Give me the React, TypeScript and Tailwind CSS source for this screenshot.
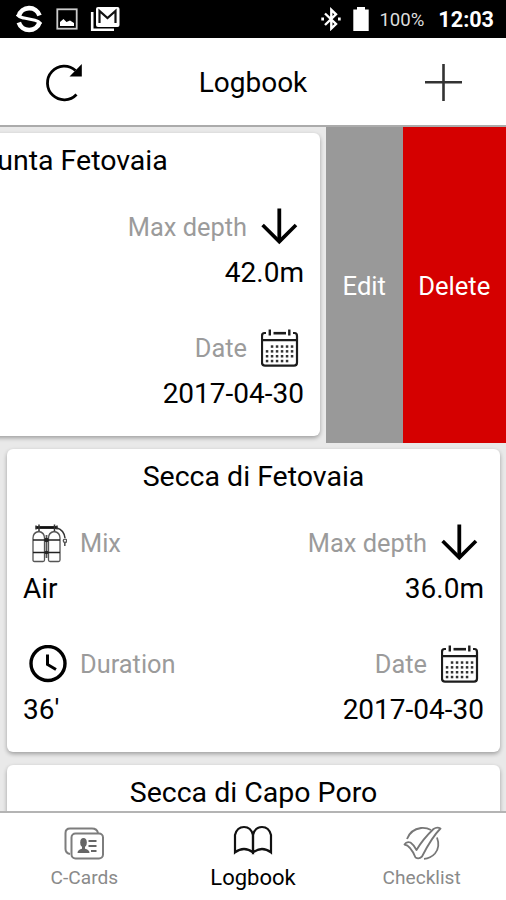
import type { ReactNode } from "react";

type Dive = {
  site: string;
  mix?: string;
  depth?: string;
  duration?: string;
  date?: string;
};

const dives: Dive[] = [
  { site: "Punta Fetovaia", depth: "42.0m", date: "2017-04-30" },
  { site: "Secca di Fetovaia", mix: "Air", depth: "36.0m", duration: "36'", date: "2017-04-30" },
  { site: "Secca di Capo Poro" },
];

function ArrowDownIcon() {
  return (
    <svg width="38" height="38" viewBox="0 0 38 38" fill="none" stroke="#000">
      <path d="M18.3 0.5V34" strokeWidth="3.8" />
      <path d="M1.6 17L18.3 33.6L35 17" strokeWidth="3.6" />
    </svg>
  );
}

function CalendarIcon() {
  const rows = [
    { y: 17.5, xs: [11, 16, 21, 26, 31] },
    { y: 22.3, xs: [6, 11, 16, 21, 26, 31] },
    { y: 27.2, xs: [6, 11, 16, 21, 26, 31] },
    { y: 32, xs: [6, 11, 16, 21, 26] },
  ];
  return (
    <svg width="38" height="38" viewBox="0 0 38 38" fill="none" stroke="#1c1c1c">
      <path d="M5 4H3.5Q1 4 1 7V33.5Q1 36.7 4 36.7H33Q36 36.7 36 33.5V7Q36 4 33.5 4H32" strokeWidth="2.2" />
      <path d="M12.5 4.2H25" strokeWidth="2.6" />
      <path d="M8.8 0.5V6.5M28.3 0.5V6.5" strokeWidth="2.4" />
      <path d="M1 11.2H36" strokeWidth="2.2" />
      {rows.map((row) =>
        row.xs.map((x) => (
          <rect key={`${x}-${row.y}`} x={x - 1.2} y={row.y - 1.2} width="2.5" height="2.5" fill="#333" stroke="none" />
        ))
      )}
    </svg>
  );
}

function ClockIcon() {
  return (
    <svg width="38" height="38" viewBox="0 0 38 38" fill="none" stroke="#000">
      <circle cx="19" cy="18.5" r="17" strokeWidth="3.4" />
      <path d="M18.5 9.5V19.5L27 24.5" strokeWidth="3" />
    </svg>
  );
}

function TanksIcon() {
  return (
    <svg width="38" height="40" viewBox="0 0 38 40" fill="none" stroke="#555">
      <path d="M4 37V15Q4 9.5 9.8 8.5Q15.5 9.5 15.5 15V37Q15.5 38.5 14 38.5H5.5Q4 38.5 4 37Z" strokeWidth="1.3" />
      <path d="M19.5 37V15Q19.5 9.5 25.2 8.5Q31 9.5 31 15V37Q31 38.5 29.5 38.5H21Q19.5 38.5 19.5 37Z" strokeWidth="1.3" />
      <path d="M4 17H31M4 29.5H31" stroke="#222" strokeWidth="1.5" />
      <path d="M17.5 12V35" strokeWidth="1.8" />
      <path d="M7 4.5H28" stroke="#111" strokeWidth="2.8" />
      <path d="M10 1.5V8M25.5 1.5V8M7 2.5V6.5M28 2.5V6.5" stroke="#333" strokeWidth="1.5" />
      <path d="M28 5Q35 7 36 15" stroke="#333" strokeWidth="1.5" />
      <circle cx="36" cy="17.8" r="1.7" strokeWidth="1.4" />
      <path d="M35.8 19.5V23" strokeWidth="1.6" />
      <circle cx="17.5" cy="17" r="2.2" fill="#222" stroke="none" />
      <circle cx="17.5" cy="29.5" r="1.8" fill="#222" stroke="none" />
    </svg>
  );
}

type FieldProps = { icon: ReactNode; label: string; value?: string; right?: boolean };

function Field({ icon, label, value, right }: FieldProps) {
  if (!value) return null;
  return (
    <div className={right ? "col-start-2 text-right" : ""}>
      <div className={`flex h-[38px] items-center gap-2 ${right ? "flex-row-reverse" : ""}`}>
        <span className="flex w-[49px] justify-center">{icon}</span>
        <span className="text-[25.4px] leading-[38px] text-[#9b9b9b]">{label}</span>
      </div>
      <div className="mt-[9px] text-[28px] leading-9">{value}</div>
    </div>
  );
}

function DiveCard({ dive }: { dive: Dive }) {
  return (
    <div className="h-[316px] w-[506px] shrink-0 bg-[#e9e9e9] pt-1.5 pr-1.5 pl-[7px]">
      <div className="h-[303px] rounded-md bg-white px-4 shadow-[0_2px_4px_rgba(0,0,0,0.32)]">
        <h2 className="pt-px text-center text-[28.5px] leading-[54px]">{dive.site}</h2>
        <div className="mt-5 grid grid-cols-2 gap-y-[38px]">
          <Field icon={<TanksIcon />} label="Mix" value={dive.mix} />
          <Field icon={<ArrowDownIcon />} label="Max depth" value={dive.depth} right />
          <Field icon={<ClockIcon />} label="Duration" value={dive.duration} />
          <Field icon={<CalendarIcon />} label="Date" value={dive.date} right />
        </div>
      </div>
    </div>
  );
}

function StatusBar() {
  return (
    <div className="flex h-[38px] shrink-0 items-center bg-black pr-3 pl-4 text-white">
      <svg width="26" height="28" viewBox="0 0 26 28" fill="none" stroke="#fff">
        <path d="M23.5 10.5A10.8 10.6 0 0 0 2.8 11" strokeWidth="4.6" />
        <path d="M2.8 17.5A10.8 10.6 0 0 0 23.5 17.5" strokeWidth="4.6" />
        <path d="M1 9.5Q3 12.3 7 12.8L19 15.3Q23 16.2 25 19" strokeWidth="3.2" />
      </svg>
      <svg className="ml-3.5" width="22" height="22" viewBox="0 0 22 22">
        <rect x="1.3" y="1.3" width="19.4" height="19.4" fill="none" stroke="#ccc" strokeWidth="1.8" />
        <path d="M4 18V14L7.5 11L10.5 14L14 12.5L18 15V18Z" fill="#fff" />
      </svg>
      <svg className="ml-3" width="30" height="26" viewBox="0 0 30 26">
        <path d="M2.2 6V23.8H24" fill="none" stroke="#fff" strokeWidth="2.6" />
        <rect x="6" y="1" width="23.5" height="20" rx="2" fill="#fff" />
        <path d="M9.5 17V5L17.5 12L25.5 5V17" fill="none" stroke="#111" strokeWidth="2.2" />
      </svg>
      <svg className="ml-auto" width="20" height="24" viewBox="0 0 20 24" fill="none" stroke="#fff" strokeWidth="2.4">
        <path d="M4 6.5L15 17L10.3 21.5V2.8L15 7.3L4 18" />
        <path d="M0.3 12H3M17 12H19.7" strokeWidth="2.8" />
      </svg>
      <svg className="ml-3" width="16" height="25" viewBox="0 0 16 25" fill="#fff">
        <path d="M4 0H12V2.5H15.7V24H0.3V2.5H4Z" />
      </svg>
      <span className="ml-2.5 pt-0.5 text-[18.6px] leading-[38px] text-[#ddd]">100%</span>
      <span className="ml-3.5 pt-0.5 text-[21.6px] leading-[38px] font-bold">12:03</span>
    </div>
  );
}

function Header() {
  return (
    <header className="grid h-[89px] shrink-0 grid-cols-[100px_1fr_100px] items-center border-b-2 border-[#ababab] pt-0.5">
      <svg className="ml-[45px]" width="38" height="38" viewBox="0 0 38 38">
        <path d="M31.5 30.5A16.8 16.8 0 1 1 30.5 6.5" fill="none" stroke="#000" strokeWidth="2.8" />
        <path d="M36.8 0V12.5H24.5Z" fill="#000" />
      </svg>
      <h1 className="text-center text-[28px]">Logbook</h1>
      <svg className="ml-[19px]" width="38" height="38" viewBox="0 0 38 38" fill="none" stroke="#333" strokeWidth="2.6">
        <path d="M18.5 0V37M0 18.3H37" />
      </svg>
    </header>
  );
}

function TabBar() {
  return (
    <nav className="grid h-[89px] shrink-0 grid-cols-3 border-t-2 border-[#b4b4b4] bg-white text-[19.1px] text-[#8a8a8a]">
      <div className="flex flex-col items-center pt-3.5">
        <svg width="40" height="34" viewBox="0 0 40 34" fill="none" stroke="#7d7d7d" strokeWidth="2">
          <path d="M6 27Q1.5 26 1.5 22V6Q1.5 1.5 6 1.5H28Q33 1.5 34 6" />
          <rect x="7.5" y="6.5" width="31.5" height="25" rx="4" />
          <ellipse cx="19.5" cy="15.5" rx="3.3" ry="4.5" fill="#666" stroke="none" />
          <path d="M18 18H21V22H18Z" fill="#666" stroke="none" />
          <path d="M13.5 26Q13.5 22.3 19.5 21.5Q25.5 22.3 25.5 26Z" fill="#666" stroke="none" />
          <path d="M24.5 14H32.5M24.5 19H32.5M27 24H32.5" stroke="#666" />
        </svg>
        <span className="leading-[34px]">C-Cards</span>
      </div>
      <div className="flex flex-col items-center pt-3 text-[22px] text-black">
        <svg width="40" height="36" viewBox="0 0 40 36" fill="none" stroke="#111" strokeWidth="2.2">
          <path d="M20 27.5V10Q18 2 11 2Q4 2 2 10V27.5Q11 20.5 20 27.5Z" />
          <path d="M20 27.5V10Q22 2 29 2Q36 2 38 10V27.5Q29 20.5 20 27.5Z" />
        </svg>
        <span className="leading-[34px]">Logbook</span>
      </div>
      <div className="flex flex-col items-center pt-[13px]">
        <svg width="40" height="35" viewBox="0 0 40 35" fill="none" stroke="#777" strokeWidth="1.8" strokeLinejoin="round">
          <path d="M2.5 18.5Q4.5 15 8.5 16.5Q11.5 18.5 14.5 24Q21 13 31.5 3Q35 0.5 38.5 2.5Q30 11 20 30.5Q17 33.5 13.5 31.5Q8.5 19.5 2.5 18.5Z" />
          <path d="M5 13Q8.5 3.5 19 2Q24.5 1.5 29 4M35 11.5Q38.5 21 33 27.5Q28.5 32.5 22 32.8" />
        </svg>
        <span className="leading-[34px]">Checklist</span>
      </div>
    </nav>
  );
}

export default function App() {
  const [swiped, ...rest] = dives;
  return (
    <div className="flex h-[900px] w-[506px] flex-col overflow-hidden bg-white font-[Roboto,sans-serif] text-black">
      <StatusBar />
      <Header />
      <main className="min-h-0 flex-1 overflow-hidden bg-[#e9e9e9]">
        <div className="flex h-[316px] overflow-hidden">
          <div className="-ml-[180px] shrink-0">
            <DiveCard dive={swiped} />
          </div>
          <button className="w-[76.5px] shrink-0 bg-[#999] pt-0.5 text-[25.6px] text-white">Edit</button>
          <button className="w-[103.5px] shrink-0 bg-[#d50000] pt-0.5 text-[25.6px] text-white">Delete</button>
        </div>
        {rest.map((dive) => (
          <DiveCard key={dive.site} dive={dive} />
        ))}
      </main>
      <TabBar />
    </div>
  );
}
